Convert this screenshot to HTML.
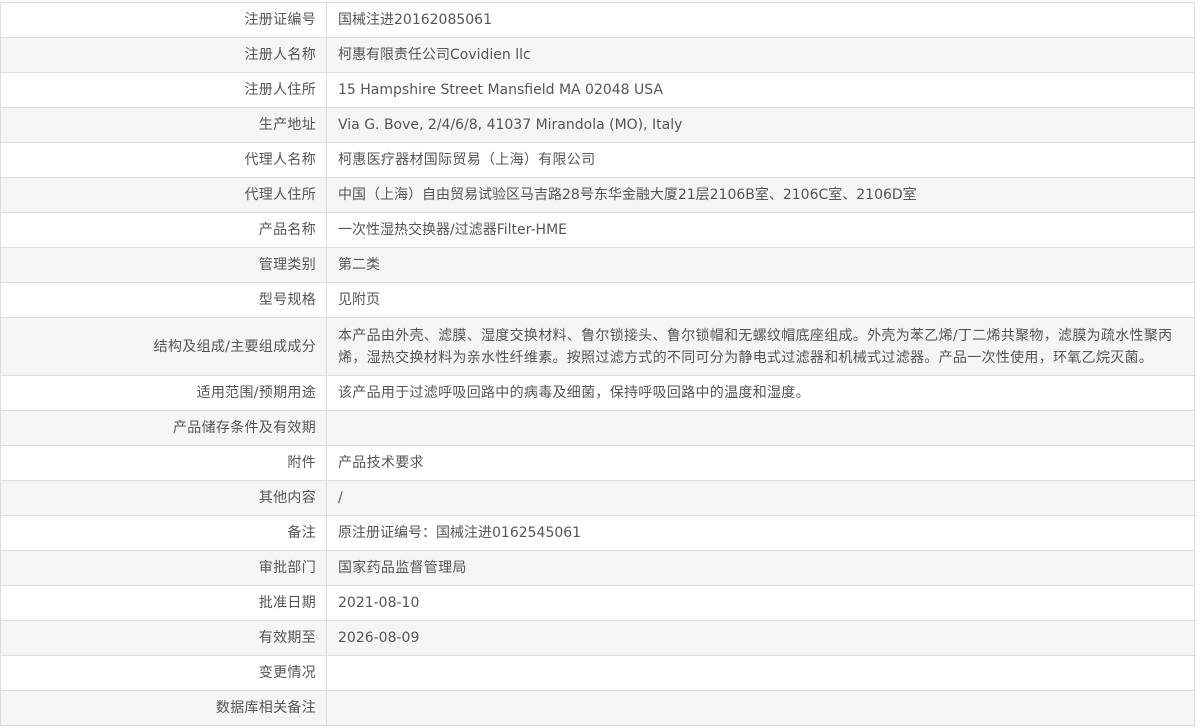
<!DOCTYPE html>
<html><head><meta charset="utf-8"><style>
body{margin:0;background:#fff;font-family:"DejaVu Sans","Noto Sans CJK SC",sans-serif;font-size:14px;color:#555;}
table{position:absolute;left:0;top:2px;width:1195px;border-collapse:collapse;}
td{border:1px solid #ddd;height:35px;padding:0 11px;box-sizing:border-box;line-height:22px;white-space:nowrap;}
td.l{width:326px;text-align:right;padding-right:10px;letter-spacing:0.3px;}
tr:nth-child(even) td{background:#f5f5f5;}
tr.big td{height:58px;}
.c{letter-spacing:0.3px;}
</style></head><body>
<table>
<tr><td class="l">注册证编号</td><td>国械注进20162085061</td></tr>
<tr><td class="l">注册人名称</td><td>柯惠有限责任公司Covidien llc</td></tr>
<tr><td class="l">注册人住所</td><td>15 Hampshire Street Mansfield MA 02048 USA</td></tr>
<tr><td class="l">生产地址</td><td>Via G. Bove, 2/4/6/8, 41037 Mirandola (MO), Italy</td></tr>
<tr><td class="l">代理人名称</td><td class="c">柯惠医疗器材国际贸易（上海）有限公司</td></tr>
<tr><td class="l">代理人住所</td><td>中国（上海）自由贸易试验区马吉路28号东华金融大厦21层2106B室、2106C室、2106D室</td></tr>
<tr><td class="l">产品名称</td><td>一次性湿热交换器/过滤器Filter-HME</td></tr>
<tr><td class="l">管理类别</td><td>第二类</td></tr>
<tr><td class="l">型号规格</td><td>见附页</td></tr>
<tr class="big"><td class="l">结构及组成/主要组成成分</td><td class="c">本产品由外壳、滤膜、湿度交换材料、鲁尔锁接头、鲁尔锁帽和无螺纹帽底座组成。外壳为苯乙烯/丁二烯共聚物，滤膜为疏水性聚丙<br>烯，湿热交换材料为亲水性纤维素。按照过滤方式的不同可分为静电式过滤器和机械式过滤器。产品一次性使用，环氧乙烷灭菌。</td></tr>
<tr><td class="l">适用范围/预期用途</td><td class="c">该产品用于过滤呼吸回路中的病毒及细菌，保持呼吸回路中的温度和湿度。</td></tr>
<tr><td class="l">产品储存条件及有效期</td><td></td></tr>
<tr><td class="l">附件</td><td class="c">产品技术要求</td></tr>
<tr><td class="l">其他内容</td><td>/</td></tr>
<tr><td class="l">备注</td><td>原注册证编号：国械注进0162545061</td></tr>
<tr><td class="l">审批部门</td><td class="c">国家药品监督管理局</td></tr>
<tr><td class="l">批准日期</td><td>2021-08-10</td></tr>
<tr><td class="l">有效期至</td><td>2026-08-09</td></tr>
<tr><td class="l">变更情况</td><td></td></tr>
<tr><td class="l">数据库相关备注</td><td></td></tr>
</table>
</body></html>
